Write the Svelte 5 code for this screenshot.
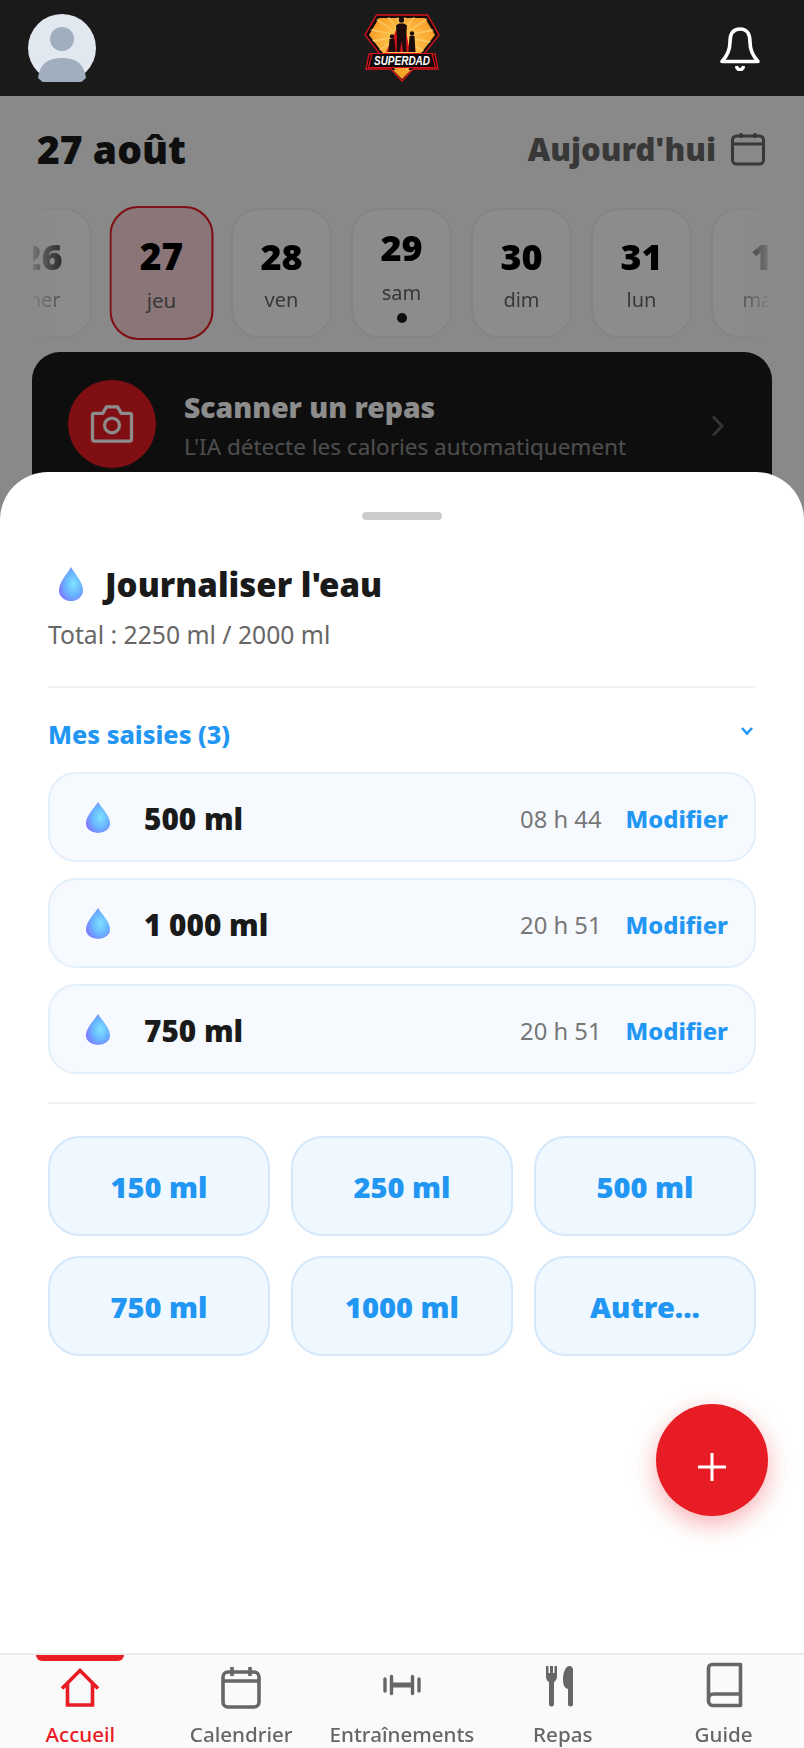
<script lang="ts">
	const days = [
		{ num: '26', label: 'mer' },
		{ num: '27', label: 'jeu', selected: true },
		{ num: '28', label: 'ven' },
		{ num: '29', label: 'sam', dot: true },
		{ num: '30', label: 'dim' },
		{ num: '31', label: 'lun' },
		{ num: '1', label: 'mar' }
	];
	const entries = [
		{ amount: '500 ml', time: '08 h 44' },
		{ amount: '1 000 ml', time: '20 h 51' },
		{ amount: '750 ml', time: '20 h 51' }
	];
	const quick = ['150 ml', '250 ml', '500 ml', '750 ml', '1000 ml', 'Autre...'];
	const rays = Array.from({ length: 16 }, (_, i) => i * 22.5 - 168);
</script>

{#snippet drop(id: string, h: number)}
	<svg class="drop" width="24" height={h} viewBox="0 0 24 34" preserveAspectRatio="none">
		<defs>
			<radialGradient {id} cx="0.6" cy="0.5" r="0.62">
				<stop offset="0" stop-color="#7fe3ff" />
				<stop offset="0.55" stop-color="#69b4ff" />
				<stop offset="1" stop-color="#7c78ff" />
			</radialGradient>
		</defs>
		<path d="M12 0C16 7 24 15 24 23.500A12 10.500 0 0 1 0 23.500C0 15 8 7 12 0Z" fill="url(#{id})" />
	</svg>
{/snippet}

<div class="app">
	<header class="topbar">
		<svg class="avatar" viewBox="0 0 68 68">
			<circle cx="34" cy="34" r="34" fill="#e2e8f0" />
			<ellipse cx="34" cy="25" rx="12" ry="12" fill="#a0aec0" />
			<path d="M10 64C12 48 22 44 34 44S56 48 58 64A34 34 0 0 1 10 64Z" fill="#a0aec0" />
		</svg>
		<svg class="logo" viewBox="0 0 76 68">
			<defs>
				<radialGradient id="sun" cx="0.5" cy="0.4" r="0.6">
					<stop offset="0" stop-color="#ffd25e" />
					<stop offset="1" stop-color="#f7961d" />
				</radialGradient>
				<clipPath id="gem"><path d="M14 3H62L72 21L38 65L4 21Z" /></clipPath>
			</defs>
			<path d="M12.500 1H63.500L75 21L60 40H71L74 55H49L38 67L27 55H2L5 40H16L1 21Z" fill="#14090a" stroke="#d8141c" stroke-width="1.300" stroke-linejoin="miter" />
			<path d="M15 4H61L71 21L38 64L5 21Z" fill="url(#sun)" />
			<g clip-path="url(#gem)">
				{#each rays as r}
					<path d="M37 22L35 -30H39Z" fill="#ffe08a" opacity="0.5" transform="rotate({r} 37 22)" />
				{/each}
			</g>
			<path d="M34 12L41 12L46 38H22Z" fill="#d8141c" />
			<path d="M32 11.500L35 9.500H40L43 11.500L42 24L42.500 38H39L37.500 27L36 38H32.500L33 24Z" fill="#1c0b0b" />
			<circle cx="37.500" cy="6" r="2.700" fill="#1c0b0b" />
			<path d="M25.500 25H30.500L31.500 38H24.500Z" fill="#1c0b0b" />
			<circle cx="28" cy="22.500" r="2.200" fill="#1c0b0b" />
			<path d="M45.500 22H50.500L51.500 38H44.500Z" fill="#1c0b0b" />
			<circle cx="48" cy="19.500" r="2.200" fill="#1c0b0b" />
			<path d="M8 39.500H68L71.500 53.500H4.500Z" fill="#14090a" stroke="#d8141c" stroke-width="1.200" />
			<text x="38" y="51" text-anchor="middle" class="logo-text" textLength="56" lengthAdjust="spacingAndGlyphs">SUPERDAD</text>
			<path d="M29 56H47L38 65Z" fill="#f7a52a" />
		</svg>
		<svg class="bell" viewBox="0 0 40 44" fill="none" stroke="#fff" stroke-width="3.600" stroke-linejoin="round">
			<path d="M20 2C12 2 10 8 10 15C10 24 7 29 2 34.500H38C33 29 30 24 30 15C30 8 28 2 20 2Z" />
			<path d="M16.500 39C17 44 23 44 23.500 39" stroke-width="3.400" />
		</svg>
	</header>

	<main class="page">
		<div class="date-row">
			<h1>27 août</h1>
			<div class="today">
				<span>Aujourd'hui</span>
				<svg width="36" height="36" viewBox="0 0 36 36" fill="none" stroke="#666" stroke-width="3">
					<rect x="2.500" y="5" width="31" height="28" rx="4" />
					<path d="M2.500 13H33.500M11 2V7M25 2V7" />
				</svg>
			</div>
		</div>

		<div class="strip">
			{#each days as day}
				<div class="day" class:selected={day.selected} class:has-dot={day.dot}>
					<b>{day.num}</b>
					<span>{day.label}</span>
					{#if day.dot}<i></i>{/if}
				</div>
			{/each}
		</div>

		<div class="scan">
			<div class="scan-icon">
				<svg width="44" height="39" viewBox="0 0 46 42" fill="none" stroke="#fff" stroke-width="3.500" stroke-linejoin="round">
					<path d="M4 9H13L17 2H29L33 9H42A2 2 0 0 1 44 11V37A2 2 0 0 1 42 39H4A2 2 0 0 1 2 37V11A2 2 0 0 1 4 9Z" />
					<circle cx="23" cy="22" r="8" />
				</svg>
			</div>
			<div class="scan-text">
				<strong>Scanner un repas</strong>
				<span>L'IA détecte les calories automatiquement</span>
			</div>
			<svg class="scan-arrow" width="13" height="22" viewBox="0 0 13 22" fill="none" stroke="#fff" stroke-width="3">
				<path d="M2 1.500L11 11L2 20.500" />
			</svg>
		</div>

		<div class="scrim"></div>

		<section class="sheet">
			<div class="handle"></div>
			<div class="sheet-title">
				{@render drop('dropTitle', 34)}
				<h2>Journaliser l'eau</h2>
			</div>
			<p class="total">Total : 2250 ml / 2000 ml</p>
			<hr />
			<div class="entries-head">
				<span>Mes saisies (3)</span>
				<svg width="14" height="10" viewBox="0 0 14 10" fill="none" stroke="#2196f3" stroke-width="2.600">
					<path d="M2 2L7 7.500L12 2" />
				</svg>
			</div>
			<ul class="entries">
				{#each entries as entry, i}
					<li>
						{@render drop('dropRow' + i, 31)}
						<b>{entry.amount}</b>
						<span class="time">{entry.time}</span>
						<span class="edit">Modifier</span>
					</li>
				{/each}
			</ul>
			<hr class="second" />
			<div class="quick">
				{#each quick as q}
					<button type="button">{q}</button>
				{/each}
			</div>
			<button type="button" class="fab" aria-label="Ajouter">
				<svg width="30" height="30" viewBox="0 0 30 30" stroke="#fff" stroke-width="3"><path d="M15 1V29M1 15H29" /></svg>
			</button>
		</section>
	</main>

	<nav class="tabs">
		<div class="tab active">
			<span class="bar"></span>
			<svg width="40" height="40" viewBox="0 0 40 40" fill="none" stroke="#e81c24" stroke-width="3.600">
				<path d="M2 20.500L20 2.500L38 20.500M7.500 16V37H32.500V16" />
			</svg>
			<span>Accueil</span>
		</div>
		<div class="tab">
			<svg width="40" height="42" viewBox="0 0 40 42" fill="none" stroke="#666" stroke-width="3.600">
				<rect x="2" y="5" width="36" height="35" rx="5" />
				<path d="M2 14H38M11 0V9M29 0V9" />
			</svg>
			<span>Calendrier</span>
		</div>
		<div class="tab">
			<svg width="40" height="42" viewBox="0 0 40 42" fill="none" stroke="#666" stroke-width="3.400" stroke-linecap="round">
				<path d="M3 12V24M9.500 9.500V26.500M30.500 9.500V26.500M37 12V24" />
				<path d="M9.500 18H30.500" stroke-width="5" stroke-linecap="butt" />
			</svg>
			<span>Entraînements</span>
		</div>
		<div class="tab">
			<svg width="40" height="44" viewBox="0 0 40 44" fill="#666">
				<path d="M3 0H5.500V7H7V0H10V7H11.500V0H14V10C14 14 12 15.500 11 16V38A2.500 2.500 0 0 1 6 38V16C5 15.500 3 14 3 10Z" />
				<path d="M26 0C29 0 30 2 30 4V38A2.500 2.500 0 0 1 25 38V23C21 22 20 18 20 13C20 7 22 1 26 0Z" />
			</svg>
			<span>Repas</span>
		</div>
		<div class="tab">
			<svg class="book" width="40" height="44" viewBox="0 0 40 44" fill="none" stroke="#666" stroke-width="3.600" stroke-linejoin="round">
				<path d="M4.500 35V2A3.500 3.500 0 0 1 8 -1.500H36.500V39.500H9A4.500 4.500 0 0 1 4.500 35V33A5 5 0 0 1 9.500 28H36.500" />
			</svg>
			<span>Guide</span>
		</div>
	</nav>
</div>

<style>
	:global(body) {
		background: #fafafa;
	}

	.app {
		width: 804px;
		height: 1748px;
		display: flex;
		flex-direction: column;
		overflow: hidden;
		font-family: 'Noto Sans', 'Open Sans', sans-serif;
	}

	.topbar {
		height: 96px;
		flex: none;
		background: #1a1a1a;
		display: flex;
		align-items: center;
		justify-content: space-between;
		padding: 0 44px 0 28px;
		position: relative;
	}

	.avatar {
		width: 68px;
		height: 68px;
	}

	.logo {
		width: 76px;
		height: 68px;
		position: absolute;
		left: 364px;
		top: 14px;
	}

	.logo-text {
		font-family: 'Liberation Sans', sans-serif;
		font-size: 12px;
		font-weight: 700;
		font-style: italic;
		fill: #fff;
	}

	.bell {
		width: 40px;
		height: 44px;
		margin-top: 2px;
	}

	.page {
		flex: 1;
		position: relative;
		background: #fafafa;
		overflow: hidden;
	}

	.date-row {
		display: flex;
		justify-content: space-between;
		align-items: center;
		padding: 30px 38px 0 37px;
		height: 46px;
	}

	h1 {
		margin: 0;
		font-size: 39px;
		font-weight: 900;
		color: #1a1a1a;
		line-height: 46px;
	}

	.today {
		display: flex;
		align-items: center;
		gap: 14px;
		font-size: 31px;
		font-weight: 900;
		color: #666;
	}

	.strip {
		display: flex;
		gap: 19px;
		margin: 33px 36px 0 33px;
		height: 136px;
		align-items: center;
		overflow: hidden;
		mask-image: linear-gradient(to right, rgba(0, 0, 0, 0.15), #000 46px, #000 690px, rgba(0, 0, 0, 0.15));
	}

	.day {
		flex: none;
		width: 101px;
		height: 130px;
		box-sizing: border-box;
		border: 2px solid #f0f0f0;
		border-radius: 28px;
		background: #fff;
		display: flex;
		flex-direction: column;
		align-items: center;
		padding-top: 24px;
	}

	.day:first-child {
		margin-left: -42px;
	}

	.day.selected {
		border-color: #e81c24;
		background: #fbd6da;
		transform: scale(1.03);
	}

	.day.has-dot {
		padding-top: 15px;
	}

	.day.has-dot span {
		margin-top: 8px;
	}

	.day b {
		font-size: 36px;
		font-weight: 900;
		line-height: 46px;
		color: #000;
	}

	.day span {
		font-size: 20px;
		color: #666;
		line-height: 28px;
		margin-top: 6px;
	}

	.day i {
		width: 10px;
		height: 10px;
		border-radius: 50%;
		background: #1a1a1a;
		margin-top: 6px;
	}

	.scan {
		margin: 11px 32px 0;
		height: 160px;
		box-sizing: border-box;
		background: #1a1a1a;
		border-radius: 28px;
		display: flex;
		align-items: flex-start;
		padding: 28px 48px 0 36px;
		gap: 28px;
	}

	.scan-icon {
		width: 88px;
		height: 88px;
		flex: none;
		border-radius: 50%;
		background: #e81c24;
		display: flex;
		align-items: center;
		justify-content: center;
	}

	.scan-text {
		flex: 1;
		display: flex;
		flex-direction: column;
		color: #fff;
		padding-top: 6px;
	}

	.scan-text strong {
		font-size: 28.300px;
		font-weight: 900;
		line-height: 42px;
	}

	.scan-text span {
		font-size: 22.500px;
		line-height: 36px;
		margin-top: 1px;
		opacity: 0.5;
	}

	.scan-arrow {
		margin-top: 35px;
		opacity: 0.3;
	}

	.scrim {
		position: absolute;
		inset: 0;
		background: rgba(0, 0, 0, 0.45);
	}

	.sheet {
		position: absolute;
		left: 0;
		right: 0;
		top: 376px;
		bottom: 0;
		background: #fff;
		border-radius: 48px 48px 0 0;
		padding: 40px 48px 0;
	}

	.handle {
		width: 80px;
		height: 8px;
		border-radius: 4px;
		background: #ccc;
		margin: 0 auto;
	}

	.sheet-title {
		display: flex;
		align-items: center;
		gap: 22px;
		margin: 47px 0 0 11px;
		height: 34px;
	}

	h2 {
		margin: 0;
		font-size: 33px;
		font-weight: 900;
		color: #1a1a1a;
	}

	.total {
		margin: 16px 0 0;
		font-size: 24.700px;
		line-height: 36px;
		color: #666;
	}

	hr {
		border: 0;
		height: 2px;
		background: #f0f3f7;
		margin: 33px 0 0;
	}

	hr.second {
		margin-top: 28px;
	}

	.entries-head {
		display: flex;
		justify-content: space-between;
		align-items: center;
		margin-top: 28px;
		height: 36px;
		color: #2196f3;
		font-size: 25.200px;
		font-weight: 800;
	}

	.entries-head svg {
		margin: 0 2px 6px 0;
	}

	.entries {
		list-style: none;
		margin: 20px 0 0;
		padding: 0;
		display: flex;
		flex-direction: column;
		gap: 16px;
	}

	.entries li {
		height: 90px;
		box-sizing: border-box;
		background: #f6faff;
		border: 2px solid #e3f0fb;
		border-radius: 28px;
		display: flex;
		align-items: center;
		padding: 0 26px 0 36px;
	}

	.entries b {
		margin-left: 34px;
		flex: 1;
		font-size: 29.700px;
		font-weight: 900;
		color: #1a1a1a;
		padding-top: 3px;
	}

	.time {
		font-size: 23.800px;
		color: #777;
		margin-right: 24px;
		padding-top: 3px;
	}

	.edit {
		font-size: 23.800px;
		font-weight: 800;
		color: #2196f3;
		padding-top: 3px;
	}

	.quick {
		display: grid;
		grid-template-columns: repeat(3, 1fr);
		gap: 20px 21px;
		margin-top: 32px;
	}

	.quick button {
		height: 100px;
		background: #eff7ff;
		border: 2px solid #d4e8fa;
		border-radius: 32px;
		font-family: inherit;
		font-size: 29px;
		font-weight: 900;
		color: #2196f3;
		padding: 0;
	}

	.fab {
		position: absolute;
		right: 36px;
		top: 932px;
		width: 112px;
		height: 112px;
		border: 0;
		border-radius: 50%;
		background: #e81c24;
		box-shadow: 0 8px 24px rgba(232, 28, 36, 0.35);
		display: flex;
		align-items: center;
		justify-content: center;
		padding: 14px 0 0;
	}

	.tabs {
		height: 93px;
		flex: none;
		background: #fafafa;
		border-top: 2px solid #eaeaea;
		display: grid;
		grid-template-columns: repeat(5, 1fr);
		box-sizing: content-box;
	}

	.tab {
		position: relative;
		display: flex;
		flex-direction: column;
		align-items: center;
		padding-top: 10px;
		color: #666;
		font-size: 20.600px;
		font-weight: 500;
	}

	.tab svg {
		height: 46px;
	}

	.tab svg.book {
		overflow: visible;
	}

	.tab > span:last-child {
		margin-top: 9px;
		line-height: 28px;
	}

	.tab.active {
		color: #e81c24;
	}

	.bar {
		position: absolute;
		top: 0;
		left: 36px;
		width: 88px;
		height: 6px;
		background: #e81c24;
		border-radius: 0 0 6px 6px;
	}
</style>
